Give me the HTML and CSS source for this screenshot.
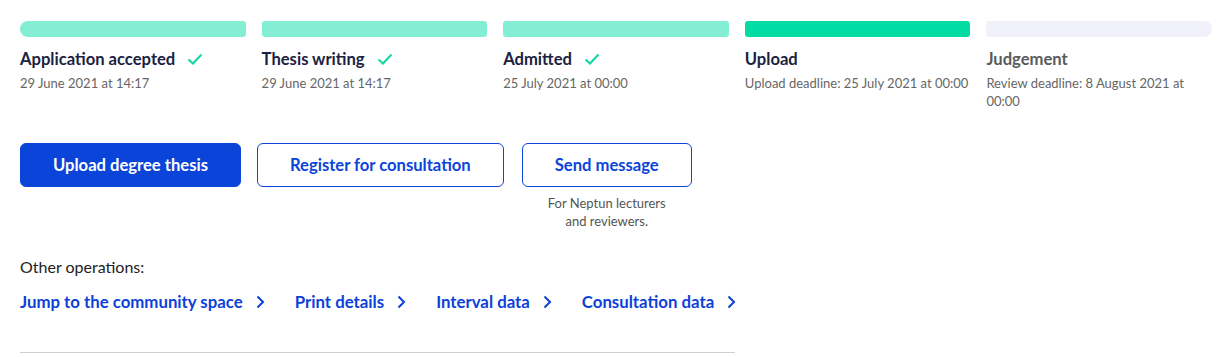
FILE: index.html
```html
<!DOCTYPE html>
<html lang="en">
<head>
<meta charset="UTF-8">
<title>Degree thesis</title>
<link rel="stylesheet" href="styles.css">
</head>
<body>

<!-- steps -->
<div class="steps">
    <div class="step done first">
        <div class="bar"></div>
        <div class="title">Application accepted <svg class="check" width="16" height="12" viewBox="0 0 16 12"><path d="M1.5 6.5 L6 10.5 L14.5 1.5" /></svg></div>
        <div class="date">29 June 2021 at 14:17</div>
    </div>
    <div class="step done">
        <div class="bar"></div>
        <div class="title">Thesis writing <svg class="check" width="16" height="12" viewBox="0 0 16 12"><path d="M1.5 6.5 L6 10.5 L14.5 1.5" /></svg></div>
        <div class="date">29 June 2021 at 14:17</div>
    </div>
    <div class="step done">
        <div class="bar"></div>
        <div class="title">Admitted <svg class="check" width="16" height="12" viewBox="0 0 16 12"><path d="M1.5 6.5 L6 10.5 L14.5 1.5" /></svg></div>
        <div class="date">25 July 2021 at 00:00</div>
    </div>
    <div class="step active">
        <div class="bar"></div>
        <div class="title">Upload</div>
        <div class="date">Upload deadline: 25 July 2021 at 00:00</div>
    </div>
    <div class="step todo last">
        <div class="bar"></div>
        <div class="title">Judgement</div>
        <div class="date">Review deadline: 8 August 2021 at 00:00</div>
    </div>
</div>

<!-- buttons -->
<div class="actions">
    <button class="btn primary">Upload degree thesis</button>
    <button class="btn outline">Register for consultation</button>
    <div class="with-note">
        <button class="btn outline">Send message</button>
        <div class="note">For Neptun lecturers<br>and reviewers.</div>
    </div>
</div>

<div class="other-label">Other operations:</div>
<div class="links">
    <a href="#">Jump to the community space <svg class="chev" width="9" height="14" viewBox="0 0 9 14"><path d="M1.5 1.5 L7 7 L1.5 12.5" /></svg></a>
    <a href="#">Print details <svg class="chev" width="9" height="14" viewBox="0 0 9 14"><path d="M1.5 1.5 L7 7 L1.5 12.5" /></svg></a>
    <a href="#">Interval data <svg class="chev" width="9" height="14" viewBox="0 0 9 14"><path d="M1.5 1.5 L7 7 L1.5 12.5" /></svg></a>
    <a href="#">Consultation data <svg class="chev" width="9" height="14" viewBox="0 0 9 14"><path d="M1.5 1.5 L7 7 L1.5 12.5" /></svg></a>
</div>

<hr class="divider">

</body>
</html>
```

FILE: styles.css
```css
body {
    font-family: Lato, "Open Sans", sans-serif;
    margin: 0;
    padding: 21px 18px 0 20px;
    color: #222;
    background: #fff;
}

.steps {
    display: grid;
    grid-template-columns: repeat(5, 1fr);
    gap: 16px;
}
.bar {
    height: 16px;
    border-radius: 3px;
}
.done .bar { background: #84eed4; }
.active .bar { background: #00dca4; }
.todo .bar { background: #f0f1fa; }
.first .bar { border-radius: 8px 3px 3px 8px; }
.last .bar { border-radius: 3px 8px 8px 3px; }

.title {
    margin-top: 10px;
    font-size: 16.6px;
    line-height: 24px;
    font-weight: 700;
    color: #1b2241;
    display: flex;
    align-items: center;
}
.todo .title { color: #5a5a5a; }
.check {
    margin-left: 12px;
    fill: none;
    stroke: #12d6a2;
    stroke-width: 2;
}
.date {
    margin-top: 3px;
    font-size: 13px;
    line-height: 18px;
    color: #666;
}

.actions {
    margin-top: 33px;
    display: flex;
    align-items: flex-start;
    gap: 16px;
}
.btn {
    font-family: inherit;
    font-size: 16.6px;
    font-weight: 700;
    line-height: 20px;
    padding: 11px 32px;
    border-radius: 6px;
    cursor: pointer;
}
.primary {
    background: #0b44d9;
    border: 1px solid #0b44d9;
    color: #fff;
}
.outline {
    background: #fff;
    border: 1px solid #0b44d9;
    color: #0b44d9;
}
.with-note {
    display: flex;
    flex-direction: column;
    align-items: center;
    margin-left: 2px;
}
.note {
    margin-top: 7px;
    font-size: 13px;
    line-height: 18px;
    color: #555;
    text-align: center;
}

.other-label {
    margin-top: 27px;
    font-size: 16px;
    line-height: 20px;
    color: #222;
}
.links {
    margin-top: 15px;
    display: flex;
    gap: 30px;
}
.links a {
    font-size: 16.8px;
    line-height: 20px;
    font-weight: 700;
    color: #0d3fd9;
    text-decoration: none;
    display: flex;
    align-items: center;
}
.chev {
    margin-left: 13px;
    fill: none;
    stroke: #0d3fd9;
    stroke-width: 2;
}

.divider {
    width: 715px;
    margin: 40px 0 0 0;
    border: none;
    border-top: 1px solid #d0d0d0;
}
```
